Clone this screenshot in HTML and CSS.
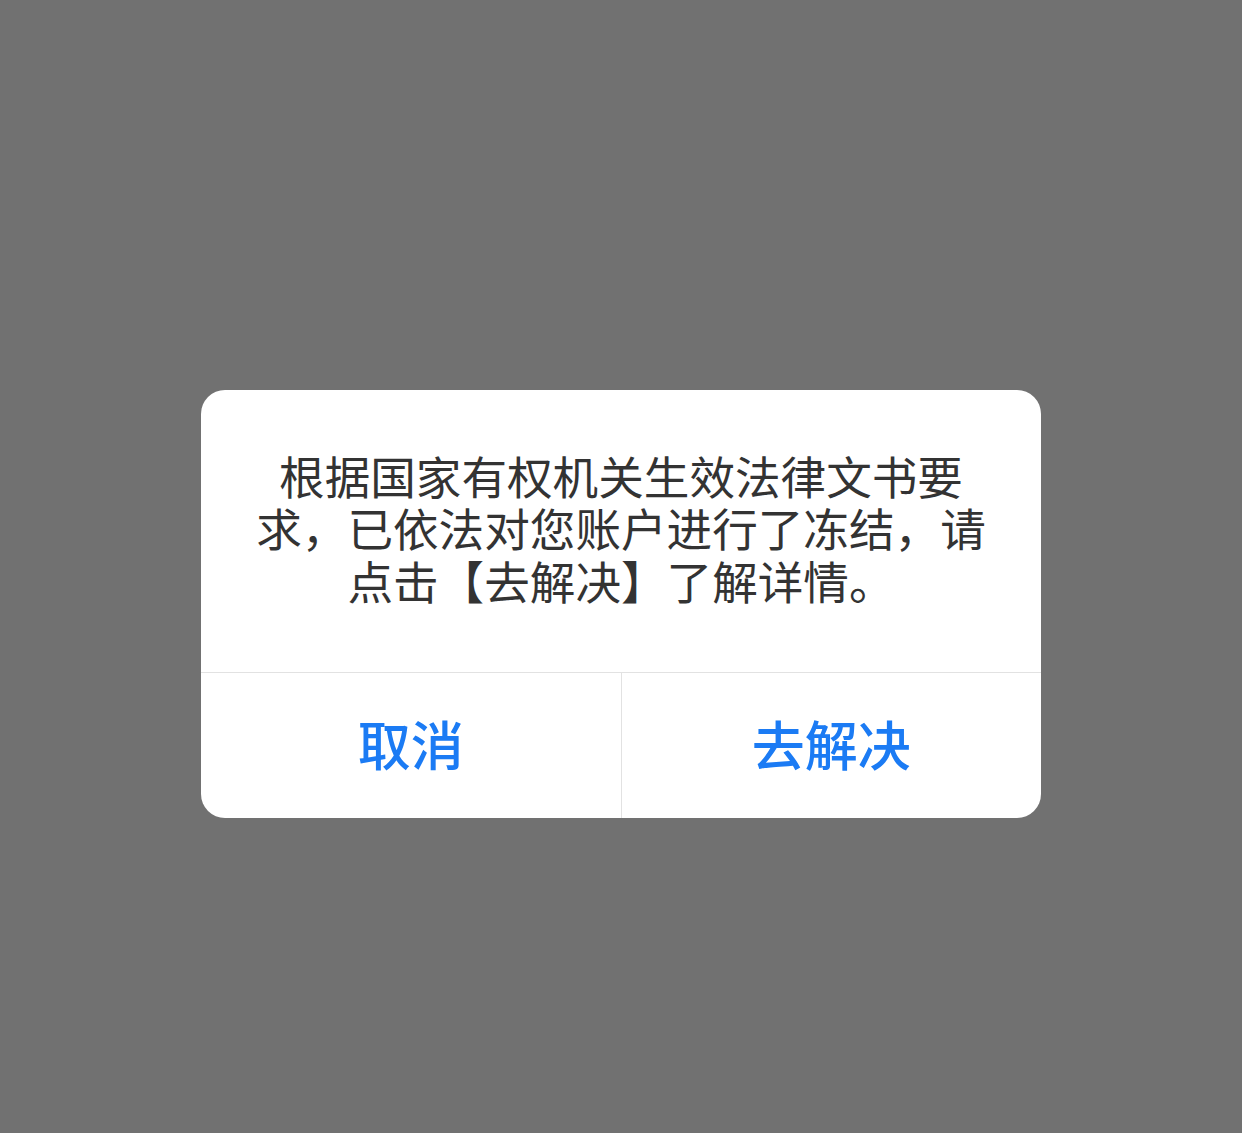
FILE: index.html
```html
<!DOCTYPE html>
<html lang="zh-CN">
<head>
  <meta charset="UTF-8">
  <meta name="viewport" content="width=device-width, initial-scale=1.0">
  <title>提示</title>
  <link rel="stylesheet" href="styles.css">
</head>
<body>
  <div class="mask">
    <div class="dialog">
      <div class="dialog-body">根据国家有权机关生效法律文书要求，已依法对您账户进行了冻结，请点击【去解决】了解详情。</div>
      <div class="dialog-footer">
        <button class="btn btn-cancel">取消</button>
        <button class="btn btn-ok">去解决</button>
      </div>
    </div>
  </div>
</body>
</html>
```

FILE: styles.css
```css
html, body {
  margin: 0;
  padding: 0;
  height: 100%;
}
body {
  background-color: #717171;
  font-family: "Noto Sans CJK SC", "Noto Sans", sans-serif;
}
.mask {
  height: 100%;
  display: flex;
  justify-content: center;
  padding-top: 390px;
  box-sizing: border-box;
}
.dialog {
  width: 840px;
  height: 428px;
  background-color: #fff;
  border-radius: 24px;
  overflow: hidden;
  display: flex;
  flex-direction: column;
}
.dialog-body {
  height: 282px;
  box-sizing: border-box;
  padding: 0 52px 7px;
  display: flex;
  align-items: center;
  justify-content: center;
  text-align: center;
  font-size: 45.6px;
  line-height: 52.5px;
  color: #333;
}
.dialog-footer {
  flex: 1;
  display: flex;
  border-top: 1px solid #e2e2e2;
}
.btn {
  flex: 1;
  border: 0;
  background: none;
  font-family: inherit;
  font-size: 53px;
  font-weight: 500;
  color: #1b7bf4;
  padding: 0 0 5px;
  margin: 0;
}
.btn-cancel {
  border-right: 1px solid #e2e2e2;
}
```
